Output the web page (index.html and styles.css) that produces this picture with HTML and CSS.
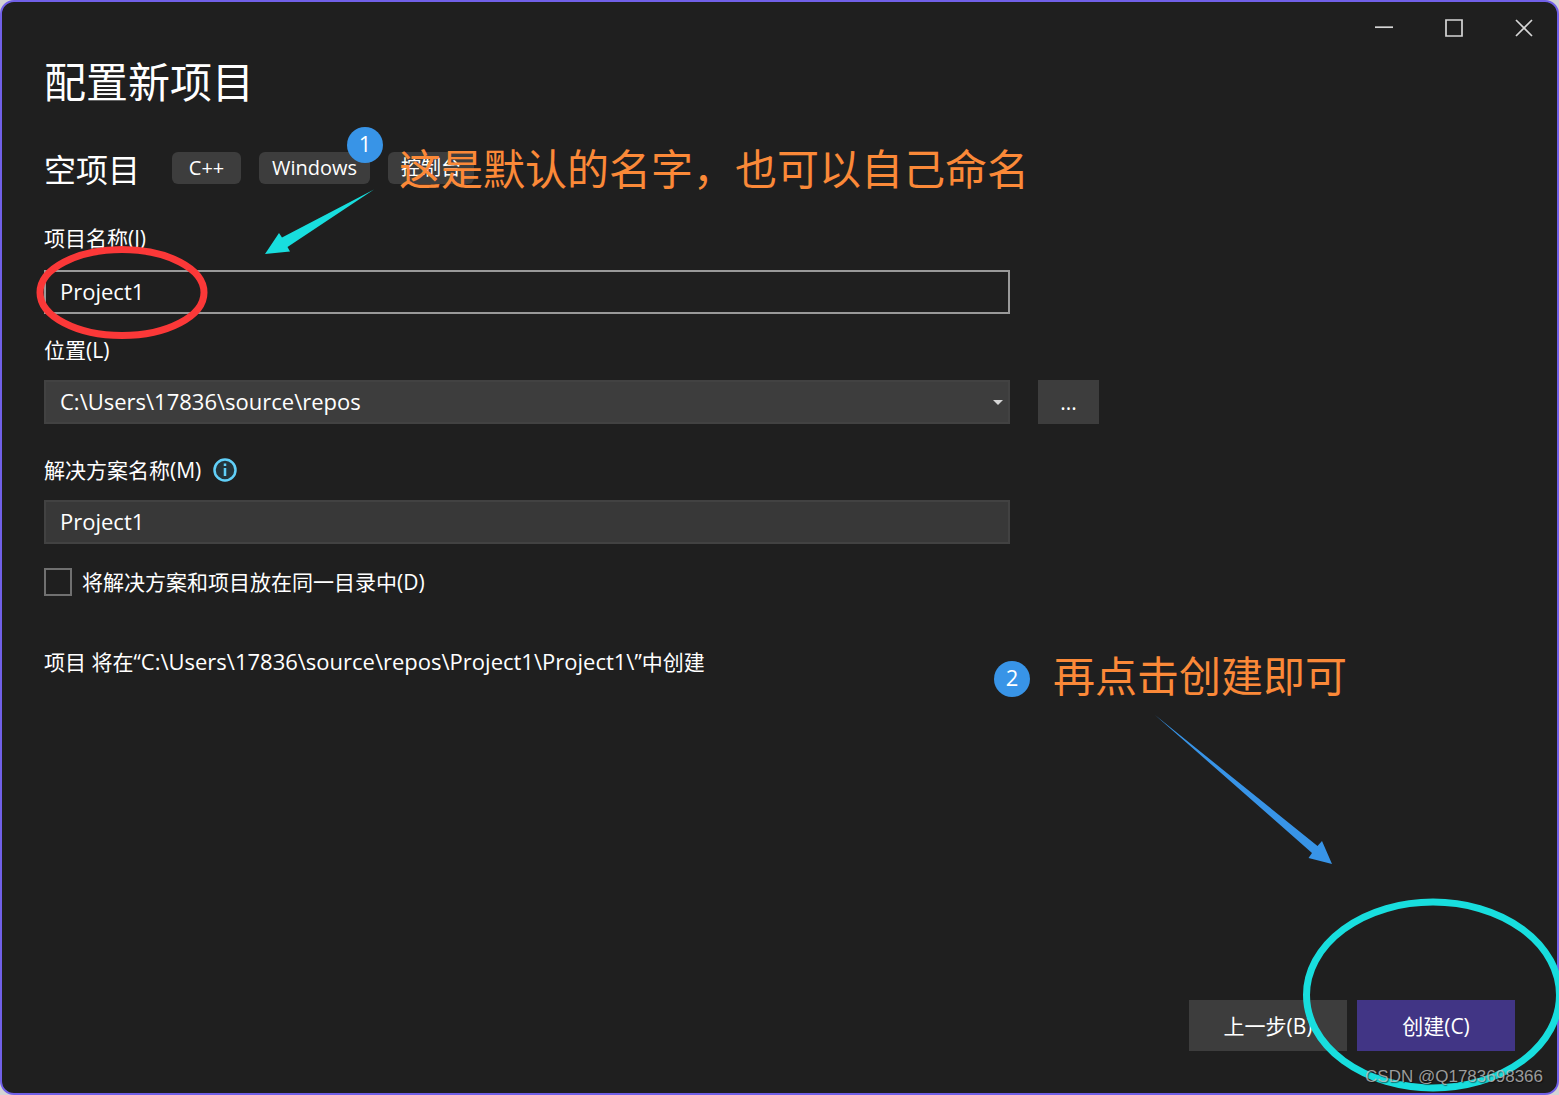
FILE: index.html
```html
<!DOCTYPE html>
<html lang="zh-CN">
<head>
<meta charset="utf-8">
<meta name="viewport" content="width=device-width, initial-scale=1">
<title>配置新项目</title>
<link rel="stylesheet" href="styles.css">
</head>
<body>
<div class="window">
  <header class="titlebar">
    <button class="caption-btn" type="button" aria-label="最小化"><svg width="20" height="20" viewBox="0 0 20 20"><path d="M1 9.200h18"/></svg></button>
    <button class="caption-btn" type="button" aria-label="最大化"><svg width="20" height="20" viewBox="0 0 20 20"><path d="M2 2h16v16H2z"/></svg></button>
    <button class="caption-btn" type="button" aria-label="关闭"><svg width="20" height="20" viewBox="0 0 20 20"><path d="M2 2l16 16M18 2L2 18"/></svg></button>
  </header>

  <main class="content">
    <h1 class="title">配置新项目</h1>
    <div class="template">
      <h2 class="template-name">空项目</h2>
      <ul class="tags">
        <li class="tag">C++</li>
        <li class="tag">Windows</li>
        <li class="tag">控制台</li>
      </ul>
    </div>

    <form class="form">
      <div class="field field-first">
        <label class="label" for="project">项目名称(J)</label>
        <input class="input input-active" id="project" type="text" value="Project1">
      </div>
      <div class="field">
        <label class="label" for="location">位置(L)</label>
        <div class="row">
          <div class="select-wrap">
            <select class="input select" id="location"><option>C:\Users\17836\source\repos</option></select>
            <svg class="chevron" width="10" height="6" viewBox="0 0 10 6"><path d="M0 0h10L5 5z"/></svg>
          </div>
          <button class="browse" type="button" aria-label="浏览">...</button>
        </div>
      </div>
      <div class="field field-solution">
        <div class="label-row">
          <label class="label" for="solution">解决方案名称(M)</label>
          <svg class="info" width="24" height="24" viewBox="0 0 24 24"><circle cx="12" cy="12" r="10.500"/><path d="M12 10v8M12 5.500v2.500"/></svg>
        </div>
        <input class="input input-soft" id="solution" type="text" value="Project1">
      </div>
      <div class="check">
        <input class="checkbox" id="same-dir" type="checkbox">
        <label class="label" for="same-dir">将解决方案和项目放在同一目录中(D)</label>
      </div>
      <p class="summary">项目 将在“<span class="path">C:\Users\17836\source\repos\Project1\Project1\</span>”中创建</p>
    </form>
  </main>

  <footer class="actions">
    <button class="btn" type="button">上一步(B)</button>
    <button class="btn btn-primary" type="button">创建(C)</button>
  </footer>

  <div class="notes">
    <span class="step step-one">1</span>
    <span class="note note-one">这是默认的名字，也可以自己命名</span>
    <svg class="arrow-one" width="112" height="68" viewBox="0 0 112 68"><path d="M110 1.500L23.500 59 26 63.500 1 66 15 45 18 49.500z"/></svg>
    <svg class="ring-one" width="172" height="94" viewBox="0 0 172 94"><ellipse cx="86" cy="46.500" rx="82" ry="43"/></svg>
    <span class="step step-two">2</span>
    <span class="note note-two">再点击创建即可</span>
    <svg class="arrow-two" width="178" height="150" viewBox="0 0 178 150"><path d="M0 0L162.500 131 167 126 177 149 153.500 143 157 138z"/></svg>
    <svg class="ring-two" width="260" height="194" viewBox="0 0 260 194"><ellipse cx="130" cy="97" rx="126.500" ry="93"/></svg>
    <span class="watermark">CSDN @Q1783698366</span>
  </div>
</div>
</body>
</html>
```

FILE: styles.css
```css
* {
  box-sizing: border-box;
}

body {
  margin: 0;
  background: #d4d4d4;
  color: #fff;
  font: 21px/32px "Open Sans", "Noto Sans CJK SC", sans-serif;
}

button,
input,
select {
  margin: 0;
  border: 0;
  border-radius: 0;
  color: inherit;
  font: inherit;
}

.window {
  position: relative;
  display: flex;
  flex-direction: column;
  min-height: 100vh;
  border: 2px solid #7160e8;
  border-radius: 14px;
  background: #1f1f1f;
}

.titlebar {
  display: flex;
  justify-content: flex-end;
  gap: 24px;
  height: 52px;
  padding-right: 10px;
}

.caption-btn {
  width: 46px;
  height: 52px;
  padding: 0;
  background: none;
}

.caption-btn svg {
  display: block;
  margin: auto;
  fill: none;
  stroke: #d6d6d6;
  stroke-width: 1.7;
}

.content {
  flex: 1;
  padding: 0 42px;
}

.title {
  margin: 0;
  font-size: 42px;
  font-weight: 400;
  line-height: 56px;
}

.template {
  display: flex;
  align-items: flex-start;
  gap: 32px;
  margin-top: 42px;
}

.template-name {
  margin: 0;
  font-size: 32px;
  font-weight: 400;
  line-height: 36px;
}

.tags {
  display: flex;
  gap: 18px;
  margin: 0;
  padding: 0;
  list-style: none;
}

.tag {
  min-width: 69px;
  padding: 0 13px;
  border-radius: 6px;
  background: #3d3d3d;
  font-size: 20px;
  line-height: 32px;
  text-align: center;
}

.form {
  max-width: 1055px;
  margin-top: 34px;
}

.field {
  display: grid;
  grid-template-columns: 1fr 61px;
  column-gap: 28px;
  row-gap: 14px;
  margin-top: 20px;
}

.field-first {
  row-gap: 16px;
}

.field-solution {
  margin-top: 30px;
}

.label,
.label-row,
.row {
  grid-column: 1 / -1;
}

.label {
  line-height: 32px;
}

.label-row {
  display: flex;
  align-items: center;
  gap: 12px;
}

.info {
  fill: #23343b;
  stroke: #61d0f9;
  stroke-width: 2.5;
}

.row {
  display: flex;
  gap: 28px;
}

.input {
  width: 100%;
  height: 44px;
  padding: 0 14px 2px;
  border: 2px solid #424242;
  background: #3d3d3d;
  font-size: 22px;
}

.input-active {
  border-color: #999;
  background: #1f1f1f;
}

.input-soft {
  background: #383838;
}

.select-wrap {
  position: relative;
  flex: 1;
  height: 44px;
}

.select {
  appearance: none;
}

.chevron {
  position: absolute;
  top: 20px;
  right: 7px;
  fill: #d6d6d6;
  pointer-events: none;
}

.browse {
  width: 61px;
  height: 44px;
  padding: 0;
  background: #3d3d3d;
}

.check {
  display: flex;
  align-items: center;
  gap: 10px;
  margin-top: 22px;
}

.checkbox {
  appearance: none;
  width: 28px;
  height: 28px;
  border: 2px solid #707070;
}

.summary {
  margin: 47px 0 0;
}

.path {
  font-size: 22px;
}

.actions {
  display: flex;
  justify-content: flex-end;
  gap: 10px;
  padding: 0 42px 42px;
}

.btn {
  width: 158px;
  height: 51px;
  padding: 0;
  background: #3d3d3d;
}

.btn-primary {
  background: #413585;
}

/* Tutorial marks drawn over the dialog */
.notes {
  position: absolute;
  inset: -2px;
  overflow: hidden;
  pointer-events: none;
}

.notes > * {
  position: absolute;
}

.step {
  width: 36px;
  height: 36px;
  border-radius: 50%;
  background: #3894e7;
  font-size: 22px;
  line-height: 32px;
  text-align: center;
}

.note {
  color: #fb8938;
  font-size: 42px;
  line-height: 56px;
  white-space: nowrap;
}

.step-one {
  top: 127px;
  left: 347px;
}

.note-one {
  top: 141px;
  left: 399px;
}

.arrow-one {
  top: 188px;
  left: 264px;
  fill: #18dede;
}

.ring-one {
  top: 246px;
  left: 36px;
  fill: none;
  stroke: #fb3838;
  stroke-width: 7;
}

.step-two {
  right: 529px;
  bottom: 398px;
}

.note-two {
  right: 212px;
  bottom: 391px;
}

.arrow-two {
  right: 226px;
  bottom: 230px;
  fill: #3894e7;
}

.ring-two {
  right: -4px;
  bottom: 3px;
  fill: none;
  stroke: #18dede;
  stroke-width: 7;
}

.watermark {
  right: 16px;
  bottom: 8px;
  color: rgba(200, 200, 200, 0.75);
  font: 17px/20px "Liberation Sans", sans-serif;
  text-shadow: 1px 1px 1px rgba(0, 0, 0, 0.5);
}
```
